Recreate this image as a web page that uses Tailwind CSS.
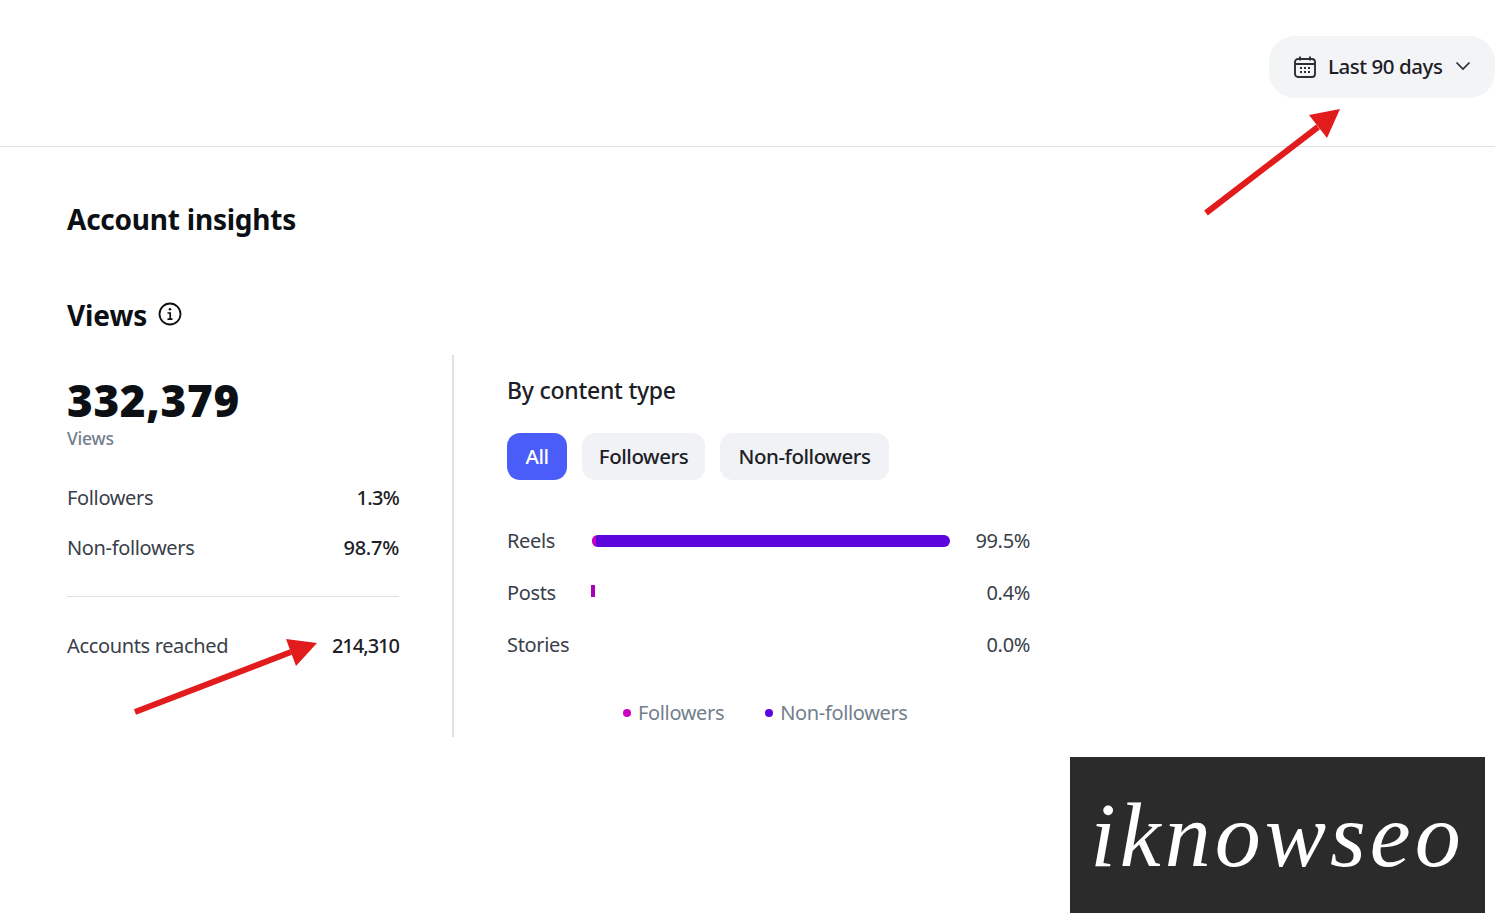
<!DOCTYPE html>
<html>
<head>
  <meta charset="utf-8">
  <title>Account insights</title>
  <script src="https://cdn.jsdelivr.net/npm/@tailwindcss/browser@4"></script>
</head>
<body class="bg-white">
  <div class="relative w-[1500px] h-[913px] overflow-hidden font-['Noto_Sans',sans-serif] text-[#1c2026]">

    <!-- top bar -->
    <header class="w-[1495px] h-[147px] border-b border-[#dde1e4] pt-[36px] flex justify-end">
      <button class="w-[226px] h-[62px] rounded-[26px] bg-[#f2f4f6] pl-[24px] flex items-center">
        <svg class="w-[24px] h-[24px]" viewBox="0 0 24 24" fill="none" stroke="#2b3036" stroke-width="1.9">
          <rect x="2" y="4" width="20" height="18" rx="3"/>
          <path d="M2 9h20M7 1.5v4M17 1.5v4"/>
          <path d="M7 13h2M11 13h2M15 13h2M7 17h2M11 17h2M15 17h2" stroke-width="2"/>
        </svg>
        <span class="ml-[11px] text-[20.5px] font-medium tracking-[-0.45px] -mt-[1px]">Last 90 days</span>
        <svg class="ml-[13px] w-[16px] h-[10px] -mt-[2px]" viewBox="0 0 16 10" fill="none" stroke="#2b3036" stroke-width="1.7">
          <path d="M1.5 1.5 8 8l6.5-6.5"/>
        </svg>
      </button>
    </header>

    <main class="pl-[67px]">
      <h1 class="mt-[51px] h-[42px] leading-[42px] text-[28px] font-bold tracking-[-0.23px] text-[#0c1014]">Account insights</h1>

      <div class="mt-[57px] h-[36px] flex items-center gap-[11px]">
        <h2 class="text-[28px] font-bold tracking-[-0.1px] text-[#0c1014]">Views</h2>
        <svg class="w-[24px] h-[24px] -mt-[2px]" viewBox="0 0 24 24" fill="none" stroke="#0c1014" stroke-width="1.8">
          <circle cx="12" cy="12" r="10.5"/>
          <path d="M9.5 11h2.7v6M9.5 17.2h5" stroke-width="1.7"/>
          <circle cx="12" cy="7.3" r="1.3" fill="#0c1014" stroke="none"/>
        </svg>
      </div>

      <div class="mt-[22px] flex">
        <!-- left column -->
        <section class="w-[387px] h-[382px] border-r-2 border-[#dfe2e5] pr-[53px]">
          <div class="pt-[20px] h-[70px] leading-[50px] text-[44px] font-black tracking-[0.65px] text-[#0c1014]">332,379</div>
          <div class="h-[26px] leading-[26px] text-[17.5px] font-medium tracking-[-0.2px] text-[#737e8c]">Views</div>
          <dl class="mt-[33px] space-y-[22px] text-[20px] tracking-[-0.35px]">
            <div class="flex justify-between h-[28px] leading-[28px]"><dt class="text-[#39404a]">Followers</dt><dd class="font-medium tracking-[-0.7px]">1.3%</dd></div>
            <div class="flex justify-between h-[28px] leading-[28px]"><dt class="text-[#39404a]">Non-followers</dt><dd class="font-medium tracking-[-0.25px]">98.7%</dd></div>
          </dl>
          <div class="mt-[34px] border-t border-[#dde1e4] pt-[35px] flex justify-between h-[28px] leading-[28px] text-[20px] tracking-[-0.35px]">
            <span class="text-[#39404a]">Accounts reached</span><span class="font-medium tracking-[-1px]">214,310</span>
          </div>
        </section>

        <!-- right column -->
        <section class="pl-[53px] w-[576px]">
          <h3 class="mt-[19px] h-[32px] leading-[32px] text-[23px] font-medium tracking-[-0.25px]">By content type</h3>
          <div class="mt-[27px] flex gap-[15px] text-[20.5px] font-medium tracking-[-0.45px]">
            <button class="w-[60px] h-[47px] rounded-[13px] bg-[#4a5df9] text-white">All</button>
            <button class="w-[123px] h-[47px] rounded-[13px] bg-[#f0f2f5]">Followers</button>
            <button class="w-[169px] h-[47px] rounded-[13px] bg-[#f0f2f5]">Non-followers</button>
          </div>
          <div class="mt-[47px] space-y-[24px] text-[20px] tracking-[-0.35px] text-[#39404a]">
            <div class="flex items-center h-[28px]">
              <span class="w-[85px]">Reels</span>
              <div class="w-[358px] h-[12px] rounded-full bg-[#5c05dc] overflow-hidden"><div class="w-[4px] h-full bg-[#c800bf]"></div></div>
              <span class="ml-auto">99.5%</span>
            </div>
            <div class="flex items-center h-[28px]">
              <span class="w-[84px]">Posts</span>
              <div class="w-[4px] h-[12px] bg-[#a800b8] -mt-[4px]"></div>
              <span class="ml-auto">0.4%</span>
            </div>
            <div class="flex items-center h-[28px]">
              <span>Stories</span>
              <span class="ml-auto">0.0%</span>
            </div>
          </div>
          <div class="mt-[39px] pl-[116px] flex items-center text-[20px] tracking-[-0.35px] text-[#737e8c]">
            <span class="w-[8px] h-[8px] rounded-full bg-[#cc00c0] mr-[7px]"></span><span>Followers</span>
            <span class="w-[8px] h-[8px] rounded-full bg-[#5c05dc] ml-[41px] mr-[7px]"></span><span>Non-followers</span>
          </div>
        </section>
      </div>
    </main>

    <!-- annotation arrows -->
    <svg class="absolute left-0 top-0 pointer-events-none" width="1500" height="913" fill="#e21c1c" stroke="none">
      <path d="M1206 213 1318 127" stroke="#e21c1c" stroke-width="6"/>
      <polygon points="1340,109 1309,115 1327,138"/>
      <path d="M135 712 291 652" stroke="#e21c1c" stroke-width="6"/>
      <polygon points="317,643 286,639 296,666"/>
    </svg>

    <!-- watermark -->
    <div class="absolute left-[1070px] top-[757px] w-[415px] h-[156px] bg-[#2b2b2b] flex items-center justify-center">
      <span class="font-['Liberation_Serif',serif] italic text-white text-[92px] leading-none tracking-[4px]">iknowseo</span>
    </div>
  </div>
</body>
</html>
